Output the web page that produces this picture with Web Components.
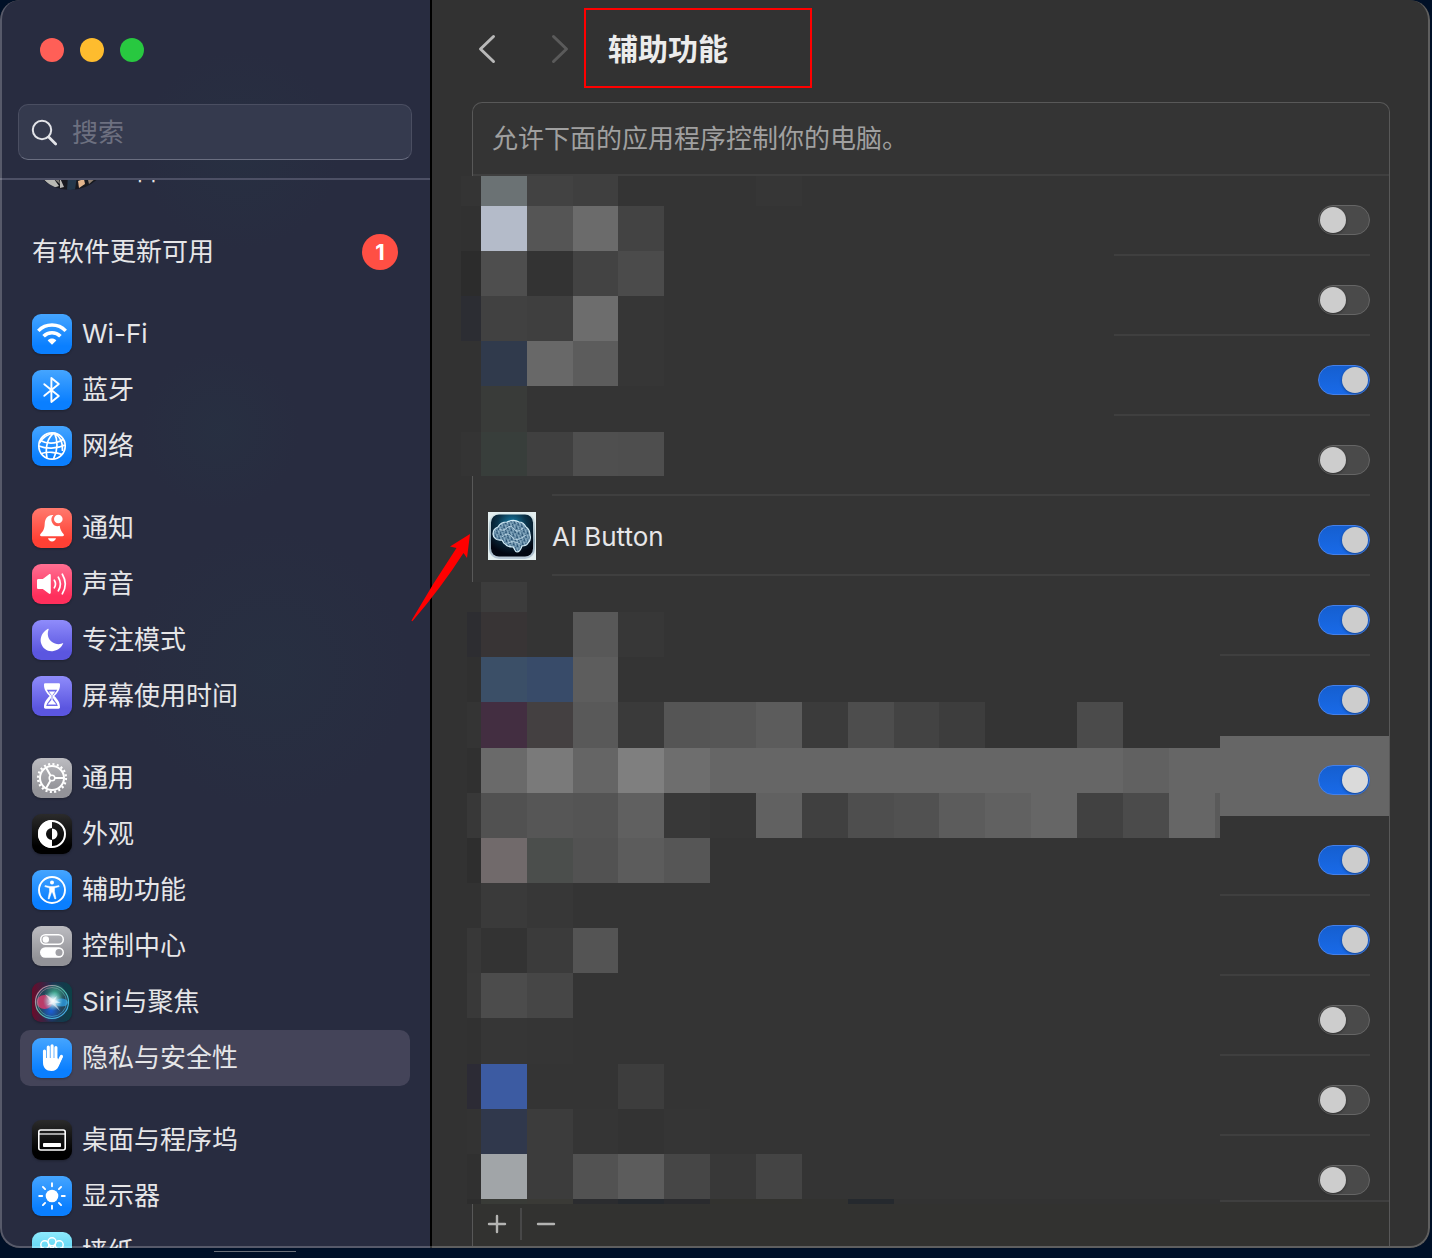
<!DOCTYPE html>
<html lang="zh-CN">
<head>
<meta charset="utf-8">
<title>辅助功能</title>
<style>
    :root {
        --font-ui: Inter, "Noto Sans CJK SC", sans-serif;
        --color-sidebar: #282c40;
        --color-main: #323232;
        --color-panel: #343434;
        --color-line: #3f3f3f;
        --color-text: #e6e6e8;
    }

    body {
        margin: 0;
        height: 100vh;
        display: flex;
        flex-direction: column;
        overflow: hidden;
        background: #001027;
        font-family: var(--font-ui);
        font-size: 26px;
        color: var(--color-text);
    }
</style>
</head>
<body>
    <mac-window>
        <settings-sidebar slot="sidebar">
            <nav-group>
                <nav-item icon="wifi">Wi-Fi</nav-item>
                <nav-item icon="bluetooth">蓝牙</nav-item>
                <nav-item icon="globe">网络</nav-item>
            </nav-group>
            <nav-group>
                <nav-item icon="bell">通知</nav-item>
                <nav-item icon="sound">声音</nav-item>
                <nav-item icon="moon">专注模式</nav-item>
                <nav-item icon="hourglass">屏幕使用时间</nav-item>
            </nav-group>
            <nav-group>
                <nav-item icon="gear">通用</nav-item>
                <nav-item icon="appearance">外观</nav-item>
                <nav-item icon="access">辅助功能</nav-item>
                <nav-item icon="control">控制中心</nav-item>
                <nav-item icon="siri">Siri与聚焦</nav-item>
                <nav-item icon="hand" selected>隐私与安全性</nav-item>
            </nav-group>
            <nav-group>
                <nav-item icon="dock">桌面与程序坞</nav-item>
                <nav-item icon="sun">显示器</nav-item>
                <nav-item icon="flower">墙纸</nav-item>
            </nav-group>
        </settings-sidebar>
        <settings-pane heading="辅助功能">
            <app-panel>
                <span slot="hint">允许下面的应用程序控制你的电脑。</span>
                <app-row></app-row>
                <app-row></app-row>
                <app-row on></app-row>
                <app-row></app-row>
                <app-row on icon="brain">AI Button</app-row>
                <app-row on></app-row>
                <app-row on plain></app-row>
                <app-row on plain selected></app-row>
                <app-row on></app-row>
                <app-row on></app-row>
                <app-row></app-row>
                <app-row></app-row>
                <app-row></app-row>
                <pixel-mask slot="mask" area="top"></pixel-mask>
                <pixel-mask slot="mask" area="bottom"></pixel-mask>
            </app-panel>
        </settings-pane>
    </mac-window>
    <desktop-edge></desktop-edge>

<script>
const BLUE = ['#45a5ff', '#0a7fff'];
const RED = ['#ff7a6e', '#ff4034'];
const PINK = ['#ff6f92', '#ff2f5c'];
const PURPLE = ['#8f8cfb', '#5b56e0'];
const GRAY = ['#bcbcc1', '#939398'];
const BLACK = ['#2b2b2b', '#000000'];

// every glyph is drawn in a 40 x 40 box
const ICONS = {
    wifi: { fill: BLUE, art: `
        <g fill="none" stroke="#fff" stroke-width="3.5">
            <path d="M6.3 16.9a19 19 0 0 1 27.4 0"/>
            <path d="M11.6 22.3a11.6 11.6 0 0 1 16.8 0"/>
        </g>
        <path fill="#fff" d="M20 30.8l-4.3-4.4c2.4-2.4 6.2-2.4 8.6 0z"/>` },
    bluetooth: { fill: BLUE, art: `
        <path fill="none" stroke="#fff" stroke-width="1.9" stroke-linecap="round" stroke-linejoin="round" d="M12.3 14.2L26.8 26 19.4 32V8l7.4 6-14.5 11.8"/>` },
    globe: { fill: BLUE, art: `
        <g fill="none" stroke="#fff" stroke-width="1.7">
            <circle cx="20" cy="20" r="13.2"/>
            <path d="M22.5 7c-7 4-9.5 14-7.5 25M22.5 7c3.5 7 3.5 17-1 26M22.5 7c-7 1-12 5-15 10M22.5 7c5 3 8.5 8 8 18"/>
            <path d="M8.5 14.5c6 3.5 15 4 22.5-1M7 20c7 3 18 3 26-1M9.5 27.500c6-2 15-1.5 20.5 1"/>
        </g>` },
    bell: { fill: RED, art: `
        <path fill="#fff" d="M20.5 7c-5 0-7.5 3.8-7.8 8.8-.2 5-1.2 7-4.2 10.2-1 1.2-.3 2.2 1 2.2h21c1.3 0 2-1 1-2.2-2.2-2.4-3.3-4.5-3.8-8.2a6.4 6.4 0 0 1-6.3-10.7z"/>
        <circle cx="26.3" cy="11" r="4.3" fill="#fff"/>
        <path fill="#fff" d="M16 30.2h8c-.5 2-2 3.2-4 3.2s-3.5-1.2-4-3.2z"/>` },
    sound: { fill: PINK, art: `
        <path fill="#fff" d="M6.5 15h4.3l6-4.6c1-.7 2-.2 2 1v17.200c0 1.2-1 1.7-2 1l-6-4.6H6.500c-1 0-1.5-.5-1.5-1.5v-7c0-1 .5-1.5 1.5-1.5z"/>
        <g fill="none" stroke="#fff" stroke-width="1.7" stroke-linecap="round">
            <path d="M22.3 16.2q2.4 3.8 0 7.6M26.3 13.2q4.2 6.8 0 13.6M30.3 10.2q6 9.8 0 19.6"/>
        </g>` },
    moon: { fill: PURPLE, art: `
        <path fill="#fff" d="M15.6 9C10.500 12 7.6 17.5 9 23c1.700 6 7.2 9 12.5 8 4.8-.8 8.200-3.8 9.8-8-2.300 1.300-5.300 1.500-8.300.6-6-2-8.700-8-6.400-14 .3-.6-.4-1-1-.6z"/>` },
    hourglass: { fill: PURPLE, art: `
        <path fill="#fff" d="M13.5 7.3h13c1 0 1.5.5 1.5 1.4 0 5-2 7.5-5.7 11.3C26 23.8 28 26.3 28 31.3c0 .9-.5 1.4-1.5 1.4h-13c-1 0-1.5-.5-1.5-1.4 0-5 2-7.5 5.7-11.3C14 16.2 12 13.7 12 8.7c0-.9.5-1.4 1.5-1.4z"/>
        <path fill="#6f6bea" d="M14.8 13.700h10.400c-1 2-2.500 3.800-4.200 5.500v2.800c.8 2 4 4.500 4.800 8H14.200c.8-3.500 4-6 4.800-8v-2.800c-1.700-1.700-3.200-3.500-4.200-5.500z"/>
        <path fill="#fff" d="M16.800 15.500h6.400L20.600 19v5l3.800 4.500h-8.800l3.800-4.500v-5z"/>` },
    gear: { fill: GRAY, art: `
        <g fill="none" stroke="#fff">
            <circle cx="20" cy="20" r="14" stroke-width="2.2" stroke-dasharray="2.1 2.298"/>
            <circle cx="20" cy="20" r="12" stroke-width="2"/>
            <circle cx="20" cy="20" r="2.8" stroke-width="1.5"/>
            <path stroke-width="2" d="M23 20h9M18.5 17.4L14 9.6M18.5 22.6L14 30.4"/>
        </g>` },
    appearance: { fill: BLACK, art: `
        <circle cx="20" cy="20" r="13" fill="none" stroke="#fff" stroke-width="2"/>
        <path fill="#fff" d="M20 6a14 14 0 0 0 0 28v-8a6 6 0 0 1 0-12z"/>
        <path fill="#fff" d="M20 14.5a5.5 5.5 0 0 1 0 11z"/>` },
    access: { fill: BLUE, art: `
        <circle cx="20" cy="20" r="13" fill="none" stroke="#fff" stroke-width="1.9"/>
        <circle cx="20" cy="12.6" r="2" fill="#fff"/>
        <path fill="#fff" stroke="#fff" stroke-width=".5" stroke-linejoin="round" d="M13 15.600l5 .9h4l5-.9.2 1-4.700 1.400v3.500l1.500 7.200-1.200.2-2.400-6.700h-.8l-2.400 6.700-1.200-.2 1.500-7.200V18l-4.700-1.400z"/>` },
    control: { fill: GRAY, art: `
        <rect x="8.7" y="8.7" width="22.6" height="9.6" rx="4.8" fill="none" stroke="#fff" stroke-width="1.5"/>
        <circle cx="13.8" cy="13.5" r="3.2" fill="#fff"/>
        <rect x="8" y="21.3" width="24" height="10.4" rx="5.2" fill="#fff"/>
        <circle cx="27" cy="26.5" r="3.5" fill="#a0a0a5"/>` },
    siri: { fill: ['#252c38', '#161b3c'], art: `
        <defs>
            <linearGradient id="siriBack"><stop stop-color="#6b0b2a"/><stop offset=".5" stop-color="#1d3150"/><stop offset="1" stop-color="#0c4147"/></linearGradient>
            <linearGradient id="siriRing" x2="1" y2="1"><stop stop-color="#e0709c"/><stop offset=".5" stop-color="#54c4ac"/><stop offset="1" stop-color="#3fa3ff"/></linearGradient>
            <radialGradient id="siriGlow"><stop stop-color="#fff"/><stop offset=".35" stop-color="#d8f4ff" stop-opacity=".8"/><stop offset="1" stop-color="#7cd" stop-opacity="0"/></radialGradient>
            <radialGradient id="siriGreen"><stop stop-color="#3fae8c"/><stop offset="1" stop-color="#3fae8c" stop-opacity="0"/></radialGradient>
            <radialGradient id="siriBlue"><stop stop-color="#1a5fd8"/><stop offset="1" stop-color="#1a5fd8" stop-opacity="0"/></radialGradient>
        </defs>
        <rect width="40" height="40" rx="9" fill="url(#siriBack)"/>
        <circle cx="20" cy="20" r="16" fill="#254458"/>
        <circle cx="23" cy="12" r="11" fill="url(#siriGreen)"/>
        <circle cx="19" cy="29" r="11" fill="url(#siriBlue)"/>
        <ellipse cx="12.5" cy="20" rx="8" ry="7" fill="#ee396d" opacity=".75"/>
        <ellipse cx="29.5" cy="20.500" rx="6.500" ry="4" fill="#2ea0e8" opacity=".75"/>
        <circle cx="21" cy="19" r="10" fill="url(#siriGlow)"/>
        <path fill="#fff" d="M13 12l8 5 4-3-2 4 6 3-6 0 5 8-8-7-5 1 4-3z" opacity=".5"/>
        <circle cx="20" cy="20" r="16.500" fill="none" stroke="url(#siriRing)" stroke-width="1.2"/>
        <circle cx="20" cy="20" r="14.500" fill="none" stroke="url(#siriRing)" stroke-width=".6"/>` },
    hand: { fill: BLUE, art: `
        <g fill="none" stroke="#fff" stroke-width="3.1" stroke-linecap="round">
            <path d="M12.5 13v10M16.3 9v14M20.1 7.7V22M23.9 9.5V23M29.5 18.3L25.5 26"/>
        </g>
        <path fill="#fff" d="M11 20h14.4l1 2.5 2.2-4.5 2 1.2-3.8 8.8c-1.4 3.3-3.8 5-7.3 5-5.2 0-8.5-3.2-8.5-8.5z"/>` },
    dock: { fill: BLACK, art: `
        <rect x="6.8" y="10" width="26.4" height="20" rx="2" fill="none" stroke="#fff" stroke-width="1.6"/>
        <path stroke="#fff" stroke-width="1.2" d="M7 14h26"/>
        <rect x="11" y="23" width="18" height="4" rx=".8" fill="#fff"/>` },
    sun: { fill: BLUE, art: `
        <circle cx="20" cy="20" r="6.3" fill="#fff"/>
        <path stroke="#fff" stroke-width="1.9" stroke-linecap="round" d="M20 7.2v3M20 29.8v3M7.2 20h3M29.8 20h3M10.9 10.9l2.2 2.2M26.9 26.9l2.2 2.2M10.9 29.1l2.2-2.2M26.9 13.1l2.2-2.2"/>` },
    flower: { fill: ['#8eeafd', '#3cc5ea'], art: `
        <g fill="none" stroke="#fff" stroke-width="1.5">
            <circle cx="20" cy="9.8" r="4"/><circle cx="27.2" cy="12.8" r="4"/><circle cx="12.8" cy="12.8" r="4"/>
            <circle cx="30" cy="20" r="4"/><circle cx="10" cy="20" r="4"/><circle cx="20" cy="20" r="4"/>
            <path d="M17 13l3 4 3-4"/>
        </g>` }
};

function drawIcon(name) {
    const { fill, art } = ICONS[name];
    return `
        <svg width="40" height="40" viewBox="0 0 40 40" aria-hidden="true">
            <defs>
                <linearGradient id="tile" x2="0" y2="1">
                    <stop stop-color="${fill[0]}"/><stop offset=".8" stop-color="${fill[1]}"/>
                </linearGradient>
            </defs>
            <rect width="40" height="40" rx="9" fill="url(#tile)"/>
            ${art}
        </svg>`;
}

class MacWindow extends HTMLElement {
    constructor() {
        super();
        this.attachShadow({ mode: 'open' });
        this.shadowRoot.innerHTML = `
            <style>
                :host {
                    flex: 1;
                    min-height: 0;
                    position: relative;
                    display: flex;
                    margin-right: 2px;
                    border-radius: 20px;
                    overflow: hidden;
                    background: var(--color-main);
                }

                /* light rim drawn over both columns */
                :host::after {
                    content: "";
                    position: absolute;
                    inset: 0;
                    border: 2px solid #ffffff38;
                    border-top-width: 0;
                    border-radius: 20px;
                    pointer-events: none;
                }
            </style>
            <slot name="sidebar"></slot>
            <slot></slot>
        `;
    }
}

class SettingsSidebar extends HTMLElement {
    constructor() {
        super();
        this.attachShadow({ mode: 'open' });
        this.shadowRoot.innerHTML = `
            <style>
                :host {
                    flex: none;
                    box-sizing: border-box;
                    width: 432px;
                    display: flex;
                    flex-direction: column;
                    border-right: 2px solid #000;
                    background:
                        radial-gradient(circle at 240px 150px, #27334380, transparent 100px),
                        radial-gradient(circle at 220px 430px, #27334380, transparent 80px),
                        radial-gradient(circle at 270px 670px, #27334380, transparent 140px),
                        var(--color-sidebar);
                }

                .top {
                    flex: none;
                    padding: 38px 18px 18px;
                    border-bottom: 2px solid #4d5065;
                }

                .lights {
                    display: flex;
                    gap: 16px;
                    padding-left: 22px;
                    margin-bottom: 42px;
                }

                .lights button {
                    width: 24px;
                    height: 24px;
                    padding: 0;
                    border: 0;
                    border-radius: 50%;
                }

                .search {
                    display: flex;
                    align-items: center;
                    gap: 14px;
                    height: 54px;
                    padding: 0 11px;
                    border: 1px solid #4a4e61;
                    border-bottom-color: #6a6e80;
                    border-radius: 10px;
                    background: #353a4e;
                }

                input {
                    flex: 1;
                    min-width: 0;
                    padding: 0;
                    border: 0;
                    outline: 0;
                    background: none;
                    color: var(--color-text);
                    font: inherit;
                }

                input::placeholder {
                    color: #6d7080;
                    opacity: 1;
                }

                nav {
                    flex: 1;
                    min-height: 0;
                    overflow: hidden;
                }

                .account {
                    display: flex;
                    gap: 12px;
                    height: 80px;
                    margin: -70px 0 34px 30px;
                }

                .account span {
                    margin-top: 46px;
                    font-size: 22px;
                    line-height: 28px;
                }

                .update {
                    display: flex;
                    align-items: center;
                    justify-content: space-between;
                    height: 56px;
                    padding: 0 32px;
                    color: inherit;
                    line-height: 32px;
                    text-decoration: none;
                }

                .badge {
                    width: 36px;
                    border-radius: 50%;
                    background: #ff4f44;
                    color: #fff;
                    font-size: 22px;
                    font-weight: 700;
                    line-height: 36px;
                    text-align: center;
                }
            </style>
            <div class="top">
                <div class="lights">
                    <button aria-label="关闭" style="background: #ff5f57"></button>
                    <button aria-label="最小化" style="background: #febc2e"></button>
                    <button aria-label="缩放" style="background: #28c840"></button>
                </div>
                <label class="search">
                    <svg width="28" height="28" viewBox="0 0 28 28" fill="none" stroke="#e2e3e8" aria-hidden="true">
                        <circle cx="12" cy="12" r="9.2" stroke-width="2"/>
                        <path d="M18.7 19l7 7" stroke-width="2.8" stroke-linecap="round"/>
                    </svg>
                    <input type="text" placeholder="搜索" aria-label="搜索">
                </label>
            </div>
            <nav>
                <div class="account">
                    <svg width="80" height="80" viewBox="0 0 80 80" aria-hidden="true">
                        <defs><clipPath id="round"><circle cx="40" cy="40" r="40"/></clipPath></defs>
                        <g clip-path="url(#round)">
                            <rect width="80" height="80" fill="#17191f"/>
                            <path fill="#b9b9b4" d="M10 66l14 3 5 7-6 2zM30 68l4 9-4 1z"/>
                            <path fill="#7d7a74" d="M24 69l5 0 1 5z"/>
                            <path fill="#24384b" d="M38 66h9l-2 14h-8z"/>
                            <path fill="#e2b48c" d="M48 71l6-2 1 5-6 4z"/>
                            <path fill="#8d7d70" d="M58 70l8-2-7 6z"/>
                        </g>
                    </svg>
                    <span>Apple ID</span>
                </div>
                <a class="update" href="#update">有软件更新可用<span class="badge">1</span></a>
                <slot></slot>
            </nav>
        `;
    }
}

class NavGroup extends HTMLElement {
    constructor() {
        super();
        this.attachShadow({ mode: 'open' });
        this.shadowRoot.innerHTML = `
            <style>
                :host {
                    display: block;
                    margin: 26px 20px 0;
                }
            </style>
            <slot></slot>
        `;
    }
}

class NavItem extends HTMLElement {
    constructor() {
        super();
        this.attachShadow({ mode: 'open' });
    }

    connectedCallback() {
        const icon = this.getAttribute('icon');
        this.shadowRoot.innerHTML = `
            <style>
                :host {
                    display: block;
                }

                a {
                    display: flex;
                    align-items: center;
                    gap: 10px;
                    height: 56px;
                    padding: 0 12px;
                    border-radius: 10px;
                    color: inherit;
                    line-height: 32px;
                    text-decoration: none;
                    white-space: nowrap;
                }

                svg {
                    flex: none;
                    filter: drop-shadow(0 1px 1px #0004);
                }

                :host([selected]) a {
                    background: #444459;
                }
            </style>
            <a href="#${icon}">${drawIcon(icon)}<span><slot></slot></span></a>
        `;
    }
}

class SettingsPane extends HTMLElement {
    constructor() {
        super();
        this.attachShadow({ mode: 'open' });
        this.shadowRoot.innerHTML = `
            <style>
                :host {
                    flex: 1;
                    min-width: 0;
                    display: flex;
                    flex-direction: column;
                    padding: 0 40px 2px;
                }

                header {
                    flex: none;
                    display: flex;
                    align-items: center;
                    height: 80px;
                    margin: 8px 0 14px;
                }

                button {
                    width: 32px;
                    height: 32px;
                    margin-right: 40px;
                    padding: 0;
                    border: 0;
                    background: none;
                }

                button + button {
                    margin-right: 8px;
                }

                svg {
                    display: block;
                    fill: none;
                    stroke-width: 3;
                    stroke-linecap: round;
                    stroke-linejoin: round;
                }

                h1 {
                    box-sizing: border-box;
                    width: 228px;
                    height: 80px;
                    margin: 0;
                    padding-left: 22px;
                    border: 2px solid #f00;
                    color: #ececec;
                    font-size: 30px;
                    line-height: 78px;
                }
            </style>
            <header>
                <button aria-label="返回">
                    <svg width="32" height="32" viewBox="0 0 32 32" stroke="#b8b8b8"><path d="M21.5 4.5L8.500 17l13 12.500"/></svg>
                </button>
                <button aria-label="前进" disabled>
                    <svg width="32" height="32" viewBox="0 0 32 32" stroke="#5a5a5a"><path d="M9.500 4.500l13 12.500-13 12.500"/></svg>
                </button>
                <h1></h1>
            </header>
            <slot></slot>
        `;
    }

    connectedCallback() {
        this.shadowRoot.querySelector('h1').textContent = this.getAttribute('heading');
    }
}

class AppPanel extends HTMLElement {
    constructor() {
        super();
        this.attachShadow({ mode: 'open' });
        this.shadowRoot.innerHTML = `
            <style>
                :host {
                    flex: 1;
                    min-height: 0;
                    position: relative;
                    display: flex;
                    flex-direction: column;
                    border: 1px solid #585858;
                    border-bottom: 0;
                    border-radius: 10px 10px 0 0;
                    background: var(--color-panel);
                }

                .hint {
                    flex: none;
                    margin: 0;
                    padding: 0 19px;
                    border-bottom: 2px solid var(--color-line);
                    color: #a0a0a0;
                    line-height: 71px;
                    white-space: nowrap;
                }

                .list {
                    flex: 1;
                    min-height: 0;
                    overflow: hidden;
                }

                footer {
                    flex: none;
                    display: flex;
                    align-items: center;
                    height: 44px;
                    border-top: 2px solid var(--color-line);
                    background: #323230;
                }

                button {
                    width: 47px;
                    height: 32px;
                    padding: 0;
                    border: 0;
                    background: none;
                }

                button + button {
                    width: 50px;
                    border-left: 2px solid #484848;
                }

                footer svg {
                    display: block;
                    margin: auto;
                    stroke: #b4b4b2;
                    stroke-width: 2.4;
                    stroke-linecap: round;
                }

                /* pointer towards the app that has to be allowed */
                .arrow {
                    position: absolute;
                    left: -62px;
                    top: 430px;
                    fill: #f00;
                }
            </style>
            <p class="hint"><slot name="hint"></slot></p>
            <div class="list"><slot></slot></div>
            <footer>
                <button aria-label="添加"><svg width="20" height="20" viewBox="0 0 20 20"><path d="M10 2v16M2 10h16"/></svg></button>
                <button aria-label="移除"><svg width="20" height="20" viewBox="0 0 20 20"><path d="M2 10h16"/></svg></button>
            </footer>
            <slot name="mask"></slot>
            <svg class="arrow" width="60" height="90" viewBox="0 0 60 90" aria-hidden="true">
                <path d="M59 1L39 13.5l6.5 1.5Q22 50 .5 87.5q.5 1.5 1.5 0Q30 55 52.500 20l3.500 5z"/>
            </svg>
        `;
    }
}

class AppRow extends HTMLElement {
    constructor() {
        super();
        this.attachShadow({ mode: 'open' });
    }

    connectedCallback() {
        const name = this.textContent.trim();
        this.shadowRoot.innerHTML = `
            <style>
                :host {
                    display: flex;
                    gap: 16px;
                    height: 80px;
                    padding: 0 19px 0 15px;
                }

                :host([selected]) {
                    background: #666;
                }

                .icon {
                    flex: none;
                    width: 48px;
                    height: 48px;
                    margin-top: 16px;
                }

                .body {
                    flex: 1;
                    display: flex;
                    align-items: flex-start;
                    justify-content: space-between;
                    border-bottom: 2px solid var(--color-line);
                }

                :host([plain]) .body {
                    border-color: transparent;
                }

                label {
                    line-height: 82px;
                    height: 78px;
                }

                input {
                    appearance: none;
                    box-sizing: border-box;
                    display: flex;
                    width: 52px;
                    height: 30px;
                    margin: 29px 0 0;
                    padding: 1px;
                    border: 1px solid #656565;
                    border-radius: 15px;
                    background: #4a4a4a;
                }

                input::before {
                    content: "";
                    width: 26px;
                    height: 26px;
                    border-radius: 50%;
                    background: #cdcdcd;
                    box-shadow: 0 1px 3px #0006;
                }

                input:checked {
                    justify-content: flex-end;
                    border-color: #4580e8;
                    background: linear-gradient(#155fd0, #196ae8);
                }

                :host([selected]) input::before {
                    background: #dadada;
                }
            </style>
            <div class="icon">${this.getAttribute('icon') === 'brain' ? this._brain() : ''}</div>
            <div class="body">
                <label for="allow"><slot></slot></label>
                <input id="allow" type="checkbox" role="switch" aria-label="${name || '应用程序'}" ${this.hasAttribute('on') ? 'checked' : ''}>
            </div>
        `;
    }

    _brain() {
        return `
            <svg width="48" height="48" viewBox="0 0 48 48" aria-hidden="true">
                <defs>
                    <linearGradient id="frame" x2="0" y2="1"><stop stop-color="#dcecee"/><stop offset=".6" stop-color="#8ea6b4"/><stop offset="1" stop-color="#b9c8d6"/></linearGradient>
                    <radialGradient id="glow" cx=".5" cy=".25" r=".7"><stop stop-color="#1687b4"/><stop offset=".5" stop-color="#0b3349"/><stop offset="1" stop-color="#020611"/></radialGradient>
                    <pattern id="cells" width="4" height="4" patternUnits="userSpaceOnUse" patternTransform="rotate(24)">
                        <rect width="4" height="4" fill="#2a5374"/>
                        <path d="M0 1h2v2h2M3 0v1" stroke="#c2e2f2" stroke-width=".9" fill="none"/>
                    </pattern>
                </defs>
                <rect width="48" height="48" fill="#e4eff0"/>
                <rect x="1" y="1" width="46" height="46" rx="10" fill="url(#frame)"/>
                <rect x="3" y="2.5" width="42" height="42" rx="8" fill="url(#glow)"/>
                <path fill="url(#cells)" stroke="#d2eaf5" stroke-width="1.2" stroke-linejoin="round" d="M5 22c0-4 2-6 5-7 2-4 6-5 9-5 4-2 9-2 12 0 4 0 6 3 7 5 3 2 4 5 4 8 1 3 0 6-2 8-1 2-3 3-6 3-1 3-3 6-5 6s-2-3-4-5c-3 0-6 0-8-3-2-1-2-3-3-4-5 1-9-2-9-6z"/>
                <path fill="none" stroke="#d2eaf5" stroke-width=".7" d="M11 17q4 3 8-1t7 1 9-1M14 25q6-6 10 0t14-2M20 31q6-3 12 1"/>
            </svg>`;
    }
}

// left and top edges of the mosaic cells, then one colour per cell; '-' keeps the panel colour
const MASKS = {
    top: {
        left: -12, top: 73,
        cols: [0, 20, 66, 112, 157, 203, 249, 295, 341, 653],
        rows: [0, 30, 75, 120, 165, 210, 256, 300],
        cells: [
            '343434 6b7274 424242 3f3f3f - - - 363636',
            '313131 b4bbc9 555555 6b6b6b 434343',
            '2c2c2c 4e4e4e 333333 434343 4b4b4b',
            '2c2d33 414141 3f3f3f 6d6d6d 363636',
            '323232 303a4c 686868 5c5c5c 363636',
            '323232 393b39',
            '343434 383e3b 404040 4f4f4f 4e4e4e'
        ]
    },
    bottom: {
        left: -6, top: 479,
        cols: [0, 14, 60, 106, 151, 197, 243, 289, 335, 381, 427, 472, 518, 564, 610, 656, 702, 748, 753],
        rows: [0, 30, 75, 120, 166, 211, 256, 301, 346, 391, 436, 482, 527, 572, 617, 622],
        cells: [
            '323232 3c3c3c',
            '2d2d31 383435 - 585858 373737',
            '303030 3b4f67 384b69 5d5d5d',
            '343434 432e41 444041 595959 3a3a3a 555555 565656 5c5c5c 3b3b3b 4d4d4d 434343 3d3d3d - - 4b4b4b',
            '303030 6a6a6a 7a7a7a 656565 7f7f7f 6e6e6e 666666 666666 666666 666666 666666 666666 666666 666666 666666 616161 666666 666666',
            '383838 515151 565656 545454 606060 383838 363636 616161 404040 4e4e4e 515151 5c5c5c 616161 666666 414141 4b4b4b 666666 5a5a5a',
            '2e2e2e 716a6b 4b4e4c 525252 5c5c5c 565656',
            '323232 3a3a3a 373737',
            '383838 333333 3b3b3b 545454',
            '393939 4c4c4c 464646',
            '313131 363636 353535',
            '2c2b35 3c5ba2 - - 3d3d3d',
            '333333 30384c 3c3c3c 353535 333333 353535',
            '303030 a1a5a8 3c3c3c 525252 5c5c5c 464646 383838 444444',
            '2d2d2d 393b37 3a3a36 2b2c2f 25292e 2a2b2e 32322f 32322f 323230 25292e 323232 323232 323232 323232 323232 323232 323232 323232'
        ]
    }
};

class PixelMask extends HTMLElement {
    constructor() {
        super();
        this.attachShadow({ mode: 'open' });
    }

    connectedCallback() {
        const { left, top, cols, rows, cells } = MASKS[this.getAttribute('area')];
        const width = cols[cols.length - 1];
        const height = rows[rows.length - 1];
        let rects = '';
        cells.forEach((line, y) => {
            line.split(' ').forEach((color, x) => {
                if (color === '-') return;
                rects += `<rect x="${cols[x]}" y="${rows[y]}" width="${cols[x + 1] - cols[x]}" height="${rows[y + 1] - rows[y]}" fill="#${color}"/>`;
            });
        });
        this.shadowRoot.innerHTML = `
            <style>
                :host {
                    position: absolute;
                    left: ${left}px;
                    top: ${top}px;
                }

                svg {
                    display: block;
                    background: var(--color-panel);
                    shape-rendering: crispEdges;
                }
            </style>
            <svg width="${width}" height="${height}" viewBox="0 0 ${width} ${height}" aria-hidden="true">${rects}</svg>
        `;
    }
}

class DesktopEdge extends HTMLElement {
    constructor() {
        super();
        this.attachShadow({ mode: 'open' });
        this.shadowRoot.innerHTML = `
            <style>
                :host {
                    flex: none;
                    display: block;
                    height: 7px;
                    padding: 3px 0 0 214px;
                }

                div {
                    width: 82px;
                    height: 1px;
                    background: #6b7078;
                }
            </style>
            <div></div>
        `;
    }
}

customElements.define('mac-window', MacWindow);
customElements.define('settings-sidebar', SettingsSidebar);
customElements.define('nav-group', NavGroup);
customElements.define('nav-item', NavItem);
customElements.define('settings-pane', SettingsPane);
customElements.define('app-panel', AppPanel);
customElements.define('app-row', AppRow);
customElements.define('pixel-mask', PixelMask);
customElements.define('desktop-edge', DesktopEdge);
</script>
</body>
</html>
